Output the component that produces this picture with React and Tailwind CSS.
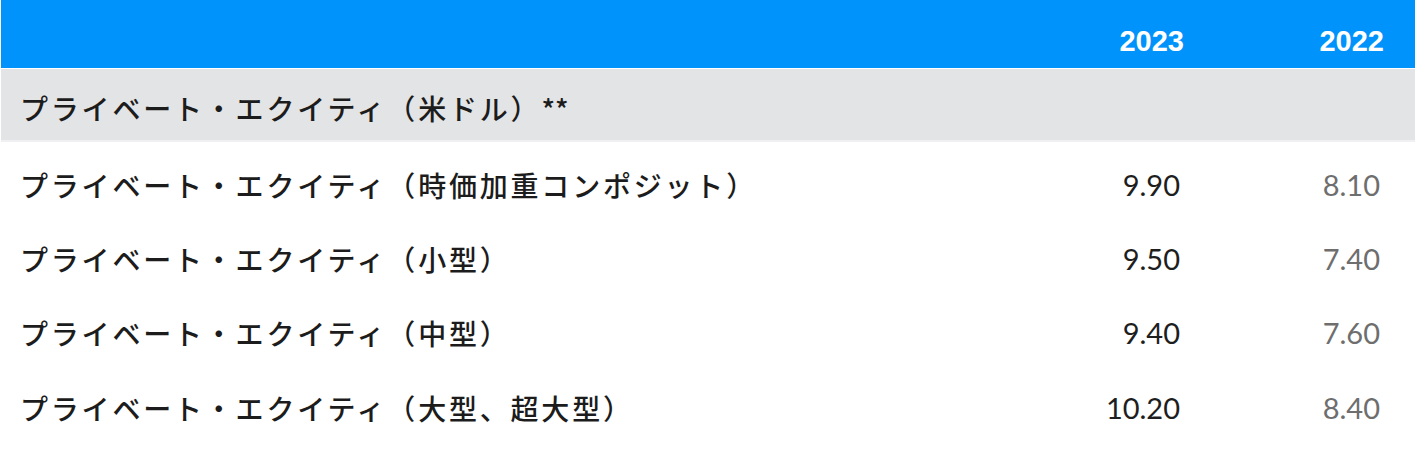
const rows = [
  { label: 'プライベート・エクイティ（時価加重コンポジット）', cur: '9.90', prev: '8.10' },
  { label: 'プライベート・エクイティ（小型）', cur: '9.50', prev: '7.40' },
  { label: 'プライベート・エクイティ（中型）', cur: '9.40', prev: '7.60' },
  { label: 'プライベート・エクイティ（大型、超大型）', cur: '10.20', prev: '8.40' },
];

const jp = { fontFamily: '"Noto Sans CJK JP", sans-serif' };
const num = { fontFamily: 'Lato, "Noto Sans", sans-serif' };

export default function App() {
  return (
    <div className="w-[1420px] h-[449px] bg-white px-[1px] pr-[5px]">
      {/* header */}
      <div className="grid grid-cols-[1fr_202px_200px] h-[68px] bg-[#0093fb] pr-[31px] text-white font-bold text-[29px]" style={{ fontFamily: '"Liberation Sans", Arial, sans-serif' }}>
        <div />
        <div className="text-right pt-[20px]">2023</div>
        <div className="text-right pt-[20px]">2022</div>
      </div>

      {/* section row */}
      <div className="mt-[1px] h-[73px] bg-[#e3e4e6] border-b-2 border-[#f0f0f2] pl-[19px] pt-[18px]">
        <span className="text-[28px] font-medium text-[#1c1c1c] tracking-[2.8px]" style={jp}>
          プライベート・エクイティ（米ドル）<span className="tracking-normal">**</span>
        </span>
      </div>

      {/* data rows */}
      {rows.map((r) => (
        <div key={r.label} className="grid grid-cols-[1fr_197px_200px] h-[74.3px] items-center pl-[19px] pr-[35px] pt-[11px]">
          <div className="text-[28px] font-medium text-[#1c1c1c] tracking-[2.8px] whitespace-nowrap" style={jp}>
            {r.label}
          </div>
          <div className="text-right text-[29px] text-[#1e1e1e]" style={num}>{r.cur}</div>
          <div className="text-right text-[29px] text-[#6e6e6e]" style={num}>{r.prev}</div>
        </div>
      ))}
    </div>
  );
}
